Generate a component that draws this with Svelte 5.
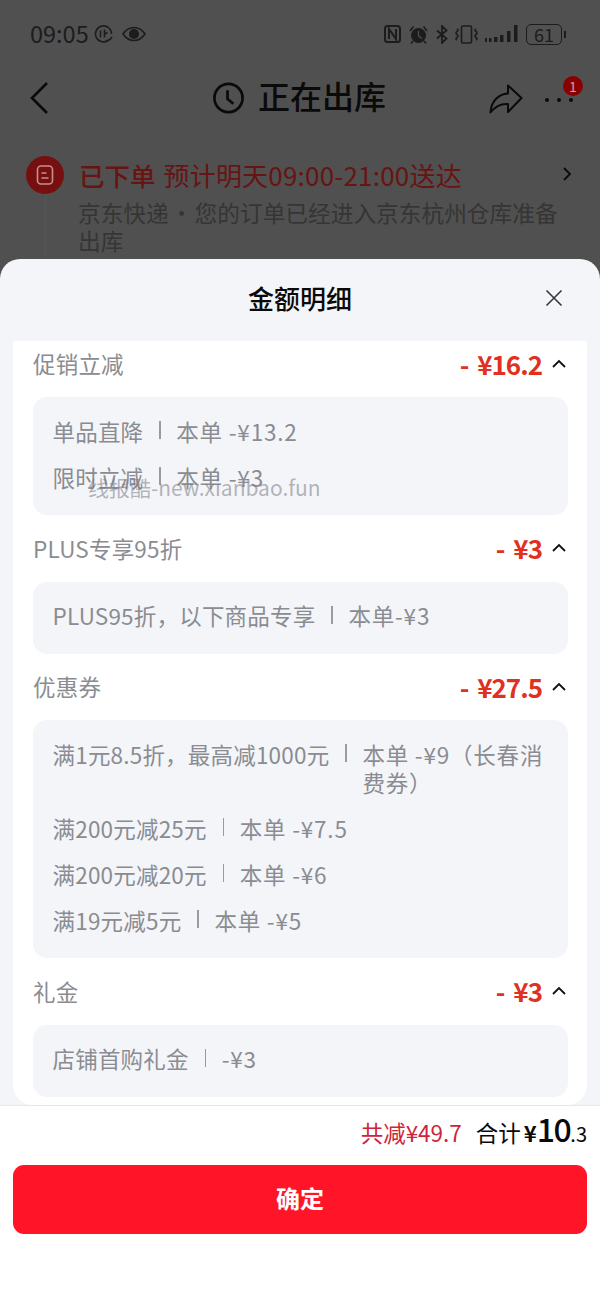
<script>
  const groups = [
    { title: '促销立减', amount: '- ¥16.2', rows: [['单品直降', '本单 -¥13.2'], ['限时立减', '本单 -¥3']] },
    { title: 'PLUS专享95折', amount: '- ¥3', rows: [['PLUS95折，以下商品专享', '本单-¥3']] },
    {
      title: '优惠券',
      amount: '- ¥27.5',
      rows: [
        ['满1元8.5折，最高减1000元', '本单 -¥9（长春消费券）'],
        ['满200元减25元', '本单 -¥7.5'],
        ['满200元减20元', '本单 -¥6'],
        ['满19元减5元', '本单 -¥5']
      ]
    },
    { title: '礼金', amount: '- ¥3', rows: [['店铺首购礼金', '-¥3']] }
  ]
</script>

<div class="page">
  <div class="status">
    <div class="status-left">
      <span class="time">09:05</span>
      <svg width="20" height="18" viewBox="0 0 20 18" fill="none" stroke="#1c1c1c" stroke-width="1.6">
        <path d="M14 15.500A8 8 0 1 1 17.500 9" />
        <path d="M6.500 5.500v7M10.500 4.500v8M10.500 9l3-1.500M12 16l4-1.500 2-2.500" />
      </svg>
      <svg class="eye" width="24" height="16" viewBox="0 0 24 16" fill="none" stroke="#1c1c1c" stroke-width="1.6">
        <path d="M1 8C4 3.500 8 1.500 12 1.500S20 3.500 23 8C20 12.500 16 14.500 12 14.500S4 12.500 1 8Z" />
        <circle cx="12" cy="8" r="5" fill="#1c1c1c" stroke="none" />
      </svg>
    </div>
    <div class="status-right">
      <svg width="17" height="18" viewBox="0 0 17 18" fill="none" stroke="#1c1c1c" stroke-width="2">
        <rect x="1" y="1" width="15" height="16" rx="2.500" />
        <path d="M5 14V4l7 10V4" />
      </svg>
      <svg width="21" height="19" viewBox="0 0 21 19" fill="#1c1c1c">
        <circle cx="10.500" cy="10.500" r="7.500" />
        <path d="M2 6l3.500-4.500M19 6l-3.500-4.500M5 16l-2 2.500M16 16l2 2.500" stroke="#1c1c1c" stroke-width="1.600" />
        <path d="M10.500 6v5l3.500 2.500" stroke="#505050" stroke-width="1.300" fill="none" />
      </svg>
      <svg width="12" height="19" viewBox="0 0 12 19" fill="none" stroke="#1c1c1c" stroke-width="1.800">
        <path d="M1 5.500l9.500 8-4.500 4.500V1l4.500 4.500-9.500 8" />
      </svg>
      <svg width="23" height="19" viewBox="0 0 23 19" fill="none" stroke="#1c1c1c" stroke-width="1.600">
        <rect x="6.500" y="1" width="10" height="17" rx="1.500" />
        <path d="M2 4q2 1 0 2.500t0 3 0 3 0 2.500M21 4q-2 1 0 2.500t0 3 0 3 0 2.500" />
      </svg>
      <svg width="34" height="18" viewBox="0 0 34 18" fill="#1c1c1c">
        <rect x="0" y="13" width="2" height="4" />
        <rect x="4" y="13" width="2.500" height="4" />
        <rect x="9" y="12" width="3.500" height="5" />
        <rect x="15" y="10" width="3.500" height="7" />
        <rect x="22" y="6" width="3.500" height="11" />
        <rect x="29" y="0" width="3.500" height="17" />
      </svg>
      <div class="battery"><span>61</span></div>
    </div>
  </div>

  <div class="nav">
    <svg class="back" width="22" height="34" viewBox="0 0 22 34" fill="none" stroke="#0a0a0a" stroke-width="2.600">
      <path d="M18 2L3 17l15 15" />
    </svg>
    <div class="nav-title">
      <svg width="33" height="34" viewBox="0 0 34 34" fill="none" stroke="#0a0a0a" stroke-width="2.800">
        <circle cx="17" cy="17" r="14.500" />
        <path d="M16 9v9l6 5" />
      </svg>
      <span>正在出库</span>
    </div>
    <svg class="share" width="34" height="30" viewBox="0 0 34 30" fill="none" stroke="#0a0a0a" stroke-width="2" stroke-linejoin="round">
      <path d="M1.500 28.500C2 18 9 10 19 9.500V1.500L32.500 14 19 28v-8C12 19.500 6 22.500 1.500 28.500Z" />
    </svg>
    <div class="more">
      <i></i><i></i><i></i>
      <span class="badge">1</span>
    </div>
  </div>

  <div class="order">
    <div class="order-icon">
      <svg width="18" height="20" viewBox="0 0 18 20" fill="none" stroke="#c98f8c" stroke-width="1.600">
        <rect x="1.500" y="1" width="15" height="18" rx="3.500" />
        <path d="M5.500 8h5M5.500 13h7" />
      </svg>
    </div>
    <div class="order-main">
      <div class="order-head">
        <b>已下单</b>
        <span>预计明天09:00-21:00送达</span>
        <svg width="10" height="16" viewBox="0 0 10 16" fill="none" stroke="#0a0a0a" stroke-width="1.800">
          <path d="M2 2l6 6-6 6" />
        </svg>
      </div>
      <p>京东快递 · 您的订单已经进入京东杭州仓库准备出库</p>
    </div>
  </div>

  <div class="sheet">
    <div class="sheet-head">
      <h2>金额明细</h2>
      <svg class="close" width="18" height="18" viewBox="0 0 18 18" fill="none" stroke="#333" stroke-width="1.500">
        <path d="M1.500 1.500l15 15M16.500 1.500l-15 15" />
      </svg>
    </div>

    <div class="card">
      {#each groups as group}
        <section>
          <div class="group-head">
            <span class="group-title">{group.title}</span>
            <span class="amount">{group.amount}</span>
            <svg width="14" height="9" viewBox="0 0 14 9" fill="none" stroke="#111" stroke-width="1.800">
              <path d="M1 8l6-6 6 6" />
            </svg>
          </div>
          <div class="box">
            {#each group.rows as row}
              <div class="row">
                <span class="name">{row[0]}</span>
                <i class="sep"></i>
                <span class="value">{row[1]}</span>
              </div>
            {/each}
          </div>
        </section>
      {/each}
    </div>

    <div class="foot">
      <div class="total">
        <span class="saved">共减¥49.7</span>
        <span class="sum">合计</span>
        <span class="price"><b>¥</b><strong>10</strong><em>.3</em></span>
      </div>
      <button>确定</button>
    </div>
  </div>

  <div class="watermark">线报酷-new.xianbao.fun</div>
</div>

<style>
  :global(body) {
    margin: 0;
    font-family: "Noto Sans CJK SC", "Noto Sans", sans-serif;
  }

  /* the page behind the sheet is painted already dimmed */
  .page {
    position: relative;
    height: 1295px;
    overflow: hidden;
    background: #505050;
    color: #0a0a0a;
  }

  .status {
    display: flex;
    justify-content: space-between;
    align-items: center;
    height: 34px;
    padding: 17px 38px 0 30px;
  }

  .status-left,
  .status-right {
    display: flex;
    align-items: center;
  }

  .status-left {
    gap: 5px;
  }

  .status-left .eye {
    margin-left: 3px;
  }

  .status-right {
    gap: 7px;
  }

  .time {
    margin-top: -2px;
    font-size: 23.500px;
    line-height: 34px;
    color: #1c1c1c;
  }

  .battery {
    position: relative;
    width: 34px;
    height: 19px;
    border: 1.500px solid #1c1c1c;
    border-radius: 5px;
    font-size: 18px;
    line-height: 19px;
    text-align: center;
    color: #1c1c1c;
  }

  .battery::after {
    content: '';
    position: absolute;
    right: -5px;
    top: 6px;
    width: 2px;
    height: 7px;
    background: #1c1c1c;
  }

  .nav {
    position: relative;
    display: flex;
    align-items: center;
    justify-content: center;
    height: 62px;
    margin-top: 16px;
  }

  .back {
    position: absolute;
    left: 29px;
    top: 14px;
  }

  .nav-title {
    display: flex;
    align-items: center;
    gap: 13px;
    font-size: 32px;
    font-weight: 500;
    margin-left: -2px;
  }

  .nav-title span {
    margin-top: -6px;
  }

  .share {
    position: absolute;
    left: 489px;
    top: 17px;
  }

  .more {
    position: absolute;
    left: 545px;
    top: 0;
    width: 28px;
    height: 62px;
    display: flex;
    justify-content: space-between;
    align-items: center;
    padding-top: 3px;
    box-sizing: border-box;
  }

  .more i {
    width: 4px;
    height: 4px;
    border-radius: 50%;
    background: #0a0a0a;
  }

  .badge {
    position: absolute;
    left: 18px;
    top: 9px;
    width: 20px;
    height: 20px;
    border-radius: 50%;
    background: #8a0000;
    color: #c9a0a0;
    font-size: 14px;
    line-height: 20px;
    text-align: center;
  }

  .order {
    display: flex;
    gap: 15px;
    padding: 27px 18px 0 26px;
  }

  .order-icon {
    position: relative;
    flex: none;
    width: 38px;
    height: 38px;
    border-radius: 50%;
    background: #761010;
    display: flex;
    align-items: center;
    justify-content: center;
  }

  .order-icon::after {
    content: '';
    position: absolute;
    left: 19px;
    top: 38px;
    width: 1px;
    height: 70px;
    background: #6f4a48;
  }

  .order-main {
    flex: 1;
    margin-top: -1px;
  }

  .order-head {
    display: flex;
    align-items: center;
    gap: 8px;
    height: 38px;
    color: #681412;
  }

  .order-head b {
    font-size: 25.500px;
    font-weight: 500;
  }

  .order-head span {
    flex: 1;
    font-size: 26px;
    letter-spacing: 0.200px;
  }

  .order-head svg {
    margin-right: 10px;
  }

  .order p {
    margin: 6px 0 0 -1px;
    padding-right: 20px;
    font-size: 22.700px;
    line-height: 28px;
    word-spacing: -3.500px;
    color: #353535;
  }

  .sheet {
    position: absolute;
    left: 0;
    right: 0;
    top: 259px;
    bottom: 0;
    display: flex;
    flex-direction: column;
    border-radius: 20px 20px 0 0;
    background: #f4f5f9;
  }

  .sheet-head {
    position: relative;
    flex: none;
    height: 82px;
    display: flex;
    justify-content: center;
  }

  .sheet-head h2 {
    margin: 20px 0 0;
    font-size: 26px;
    line-height: 38px;
    font-weight: 500;
  }

  .close {
    position: absolute;
    right: 37px;
    top: 30px;
  }

  .card {
    flex: none;
    margin: 0 13px;
    padding: 8px 19px 8px 20px;
    border-radius: 0 0 20px 20px;
    background: #fff;
  }

  section + section {
    margin-top: 18.500px;
  }

  .group-head {
    display: flex;
    align-items: center;
    height: 32px;
    margin-bottom: 16px;
  }

  .group-title {
    flex: 1;
    margin-bottom: 4px;
    font-size: 22.500px;
    letter-spacing: 0.200px;
    color: #8a8c92;
  }

  .amount {
    margin-bottom: 4px;
    font-size: 26px;
    font-weight: 700;
    color: #e1301f;
    letter-spacing: -1px;
    word-spacing: 4px;
  }

  .group-head svg {
    margin: 0 2px 4px 10px;
  }

  .box {
    padding: 13px 20px 13px 19.500px;
    border-radius: 14px;
    background: #f4f5f9;
  }

  .row {
    display: flex;
    padding: 6.500px 0 11.500px;
    font-size: 22.500px;
    line-height: 28px;
    letter-spacing: 0.200px;
    color: #8a8c92;
  }

  .name {
    flex: none;
  }

  .sep {
    flex: none;
    width: 1.500px;
    height: 18px;
    margin: 4.500px 15.500px 0 16px;
    background: #999ba1;
  }

  .value {
    letter-spacing: 0.800px;
  }

  .foot {
    flex: 1;
    border-top: 1px solid #e8e8e8;
    background: #fff;
    padding: 0 13px;
  }

  .total {
    display: flex;
    justify-content: flex-end;
    align-items: baseline;
    height: 60px;
    margin-top: -1px;
    box-sizing: border-box;
    font-size: 22.500px;
  }

  .saved {
    color: #d0233a;
    margin-right: 14px;
  }

  .sum {
    margin-right: 3px;
  }

  .price b {
    font-weight: 700;
    font-size: 22px;
  }

  .price strong {
    font-size: 32px;
    font-weight: 500;
    letter-spacing: -1.500px;
  }

  .price em {
    font-style: normal;
    font-size: 20px;
  }

  button {
    display: block;
    width: 100%;
    height: 69.500px;
    padding-bottom: 4px;
    border: 0;
    border-radius: 11px;
    background: #ff1428;
    color: #fff;
    font-family: inherit;
    font-size: 24px;
    font-weight: 700;
  }

  .watermark {
    position: absolute;
    left: 88px;
    top: 472px;
    font-size: 21px;
    line-height: 30px;
    color: rgba(120, 120, 130, 0.55);
    pointer-events: none;
  }
</style>
